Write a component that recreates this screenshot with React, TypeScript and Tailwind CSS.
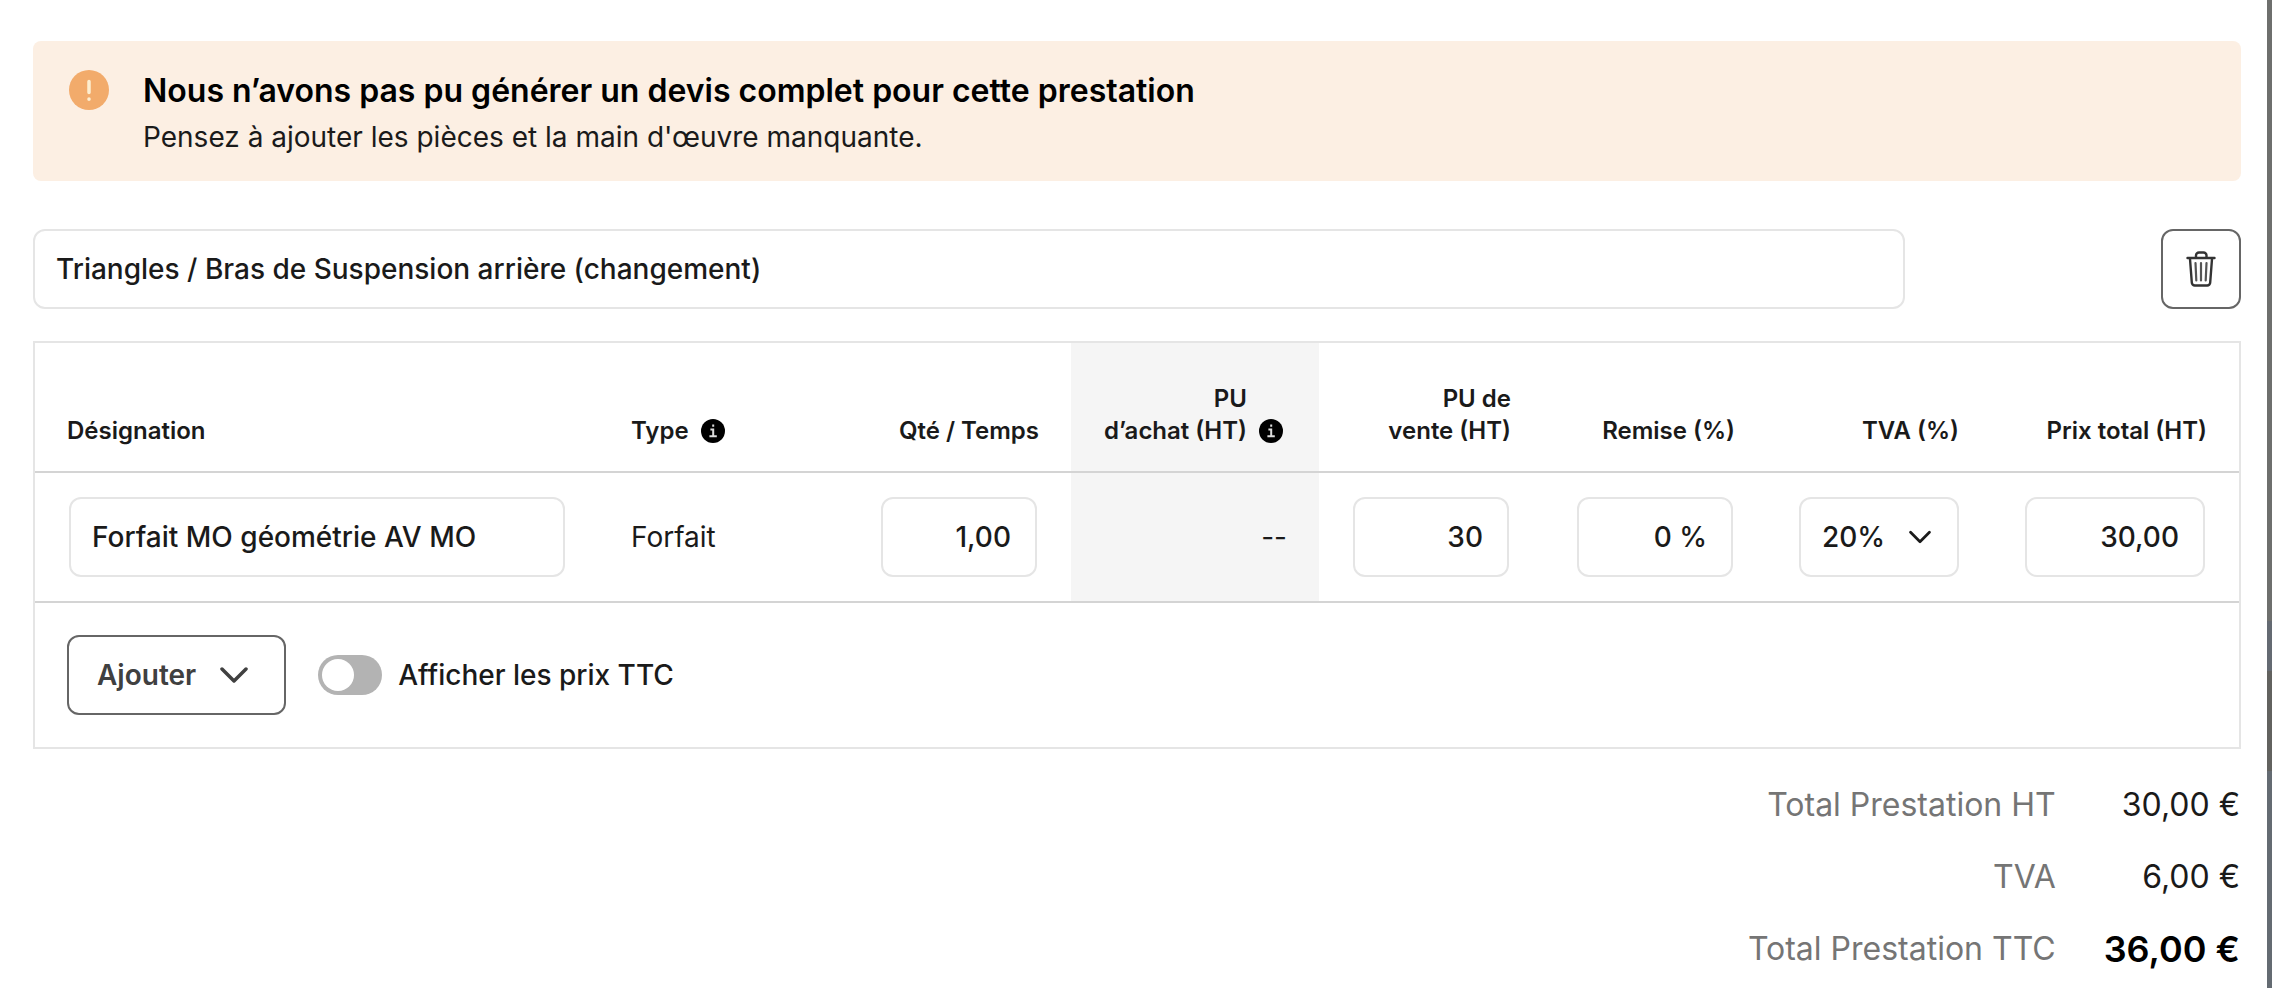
import type { ReactNode } from 'react'

const field =
  'h-20 w-full rounded-xl border-2 border-[#e5e5e5] bg-white text-[28px] font-medium text-[#1a1a1a] outline-none'

function InfoIcon() {
  return (
    <svg viewBox="0 0 24 24" className="size-6 shrink-0" aria-hidden="true">
      <circle cx="12" cy="12" r="12" fill="#000" />
      <path d="M12.2 6.6v.2M10.4 10.6h1.8v6.2M9.4 17.2h5.4" fill="none" stroke="#ddd" strokeWidth="2" strokeLinecap="square" />
    </svg>
  )
}

function TrashIcon() {
  return (
    <svg viewBox="0 0 30 36" className="h-9 w-[30px]" fill="none" stroke="#333" strokeLinecap="round" strokeLinejoin="round" aria-hidden="true">
      <path d="M1.5 7h27M10 6.5V4.500a3 3 0 0 1 3-3h4.500a3 3 0 0 1 3 3v2" strokeWidth="2.4" />
      <path d="M4 8l1.800 23.500a3 3 0 0 0 3 3h12.400a3 3 0 0 0 3-3L26 8" strokeWidth="2.4" />
      <path d="M9.500 12l.8 17.500M15 12v17.500M20.500 12l-.8 17.500" stroke="#555" strokeWidth="2.200" />
    </svg>
  )
}

function Chevron({ className }: { className: string }) {
  return (
    <svg viewBox="0 0 28 16" className={className} fill="none" stroke="currentColor" strokeWidth="3.5" strokeLinecap="round" strokeLinejoin="round" aria-hidden="true">
      <path d="M2 2l12 12L26 2" />
    </svg>
  )
}

function Th({ children, className = 'text-right' }: { children: ReactNode; className?: string }) {
  return <th scope="col" className={`px-8 pb-6 align-bottom font-semibold ${className}`}>{children}</th>
}

function NumberCell({ label, value }: { label: string; value: string }) {
  return (
    <td className="px-[34px]">
      <input aria-label={label} defaultValue={value} className={`${field} px-6 text-right`} />
    </td>
  )
}

export default function App() {
  return (
    <div className="flex min-h-screen bg-white font-['Inter',sans-serif] text-[#1a1a1a]">
      <main className="min-w-0 flex-1 pt-[41px] pr-[26px] pb-4 pl-[33px]">
        <div role="alert" className="flex gap-[34px] rounded-lg bg-[#fcefe3] px-9 pt-[25px] pb-[22px]">
          <svg viewBox="0 0 40 40" className="mt-1 size-10 shrink-0" aria-hidden="true">
            <circle cx="20" cy="20" r="20" fill="#f2ab6b" />
            <path d="M20 11.500v11M20 29v.2" stroke="#fdeed0" strokeWidth="3.5" strokeLinecap="round" />
          </svg>
          <div>
            <h2 className="text-[32px] leading-[49px] font-semibold text-black">Nous n’avons pas pu générer un devis complet pour cette prestation</h2>
            <p className="text-[28px] leading-11">Pensez à ajouter les pièces et la main d'œuvre manquante.</p>
          </div>
        </div>

        <div className="mt-12 flex justify-between">
          <div className="w-[84.8%]">
            <input aria-label="Prestation" defaultValue="Triangles / Bras de Suspension arrière (changement)" className={`${field} px-[21px]`} />
          </div>
          <button type="button" aria-label="Supprimer" className="flex size-20 items-center justify-center rounded-xl border-2 border-[#666]">
            <TrashIcon />
          </button>
        </div>

        <div className="mt-8 border-2 border-[#e5e5e5]">
          <table className="w-full table-fixed">
            <colgroup>
              <col />
              <col className="w-[248px]" />
              <col className="w-56" />
              <col className="w-[248px] bg-[#f5f5f5]" />
              <col className="w-56" />
              <col className="w-56" />
              <col className="w-56" />
              <col className="w-[248px]" />
            </colgroup>
            <thead className="text-2xl leading-8">
              <tr className="h-[129px] border-b-2 border-[#d4d4d4]">
                <Th className="text-left">Désignation</Th>
                <Th className="text-left">
                  <span className="flex items-center gap-3">Type <InfoIcon /></span>
                </Th>
                <Th>Qté / Temps</Th>
                <Th>
                  <span className="flex items-end justify-end gap-3 pr-1">
                    <span>PU<br />d’achat (HT)</span>
                    <span className="pb-1"><InfoIcon /></span>
                  </span>
                </Th>
                <Th>PU de<br />vente (HT)</Th>
                <Th>Remise (%)</Th>
                <Th>TVA (%)</Th>
                <Th>Prix total (HT)</Th>
              </tr>
            </thead>
            <tbody className="text-[28px]">
              <tr className="h-[130px] border-b-2 border-[#d4d4d4]">
                <td className="px-[34px]">
                  <input aria-label="Désignation" defaultValue="Forfait MO géométrie AV MO" className={`${field} px-[21px]`} />
                </td>
                <td className="px-8">Forfait</td>
                <NumberCell label="Qté / Temps" value="1,00" />
                <td className="px-8 text-right">--</td>
                <NumberCell label="PU de vente (HT)" value="30" />
                <NumberCell label="Remise (%)" value="0 %" />
                <td className="px-8">
                  <div className="relative">
                    <select aria-label="TVA (%)" defaultValue="20" className={`${field} appearance-none px-[21px]`}>
                      <option value="20">20%</option>
                      <option value="10">10%</option>
                      <option value="0">0%</option>
                    </select>
                    <Chevron className="pointer-events-none absolute top-8 right-7 h-4 w-[22px]" />
                  </div>
                </td>
                <NumberCell label="Prix total (HT)" value="30,00" />
              </tr>
            </tbody>
          </table>

          <div className="flex items-center px-8 py-8">
            <button type="button" className="flex h-20 items-center gap-6 rounded-xl border-2 border-[#666] pr-9 pl-7 text-[28px] font-semibold text-[#404040]">
              Ajouter
              <Chevron className="h-4 w-7" />
            </button>
            <label className="ml-8 flex items-center gap-4 text-[28px] font-medium">
              <input type="checkbox" role="switch" className="peer sr-only" />
              <span className="flex h-10 w-16 items-center rounded-full bg-[#b3b3b3] p-1 peer-checked:justify-end">
                <span className="size-8 rounded-full bg-white" />
              </span>
              Afficher les prix TTC
            </label>
          </div>
        </div>

        <dl className="mt-5 grid grid-cols-[1fr_auto] gap-x-12 pr-px text-right text-[32px] leading-[72px]">
          <dt className="text-[#757575]">Total Prestation HT</dt>
          <dd>30,00 €</dd>
          <dt className="text-[#757575]">TVA</dt>
          <dd>6,00 €</dd>
          <dt className="text-[#757575]">Total Prestation TTC</dt>
          <dd className="text-4xl leading-[72px] font-semibold text-black">36,00 €</dd>
        </dl>
      </main>

      {/* dimmed page showing behind the panel */}
      <div className="w-[5px] bg-[linear-gradient(#6e6f6d_62%,#646a72_62%_67%,#62625f_67%_77%,#646b72_77%)]" />
    </div>
  )
}
